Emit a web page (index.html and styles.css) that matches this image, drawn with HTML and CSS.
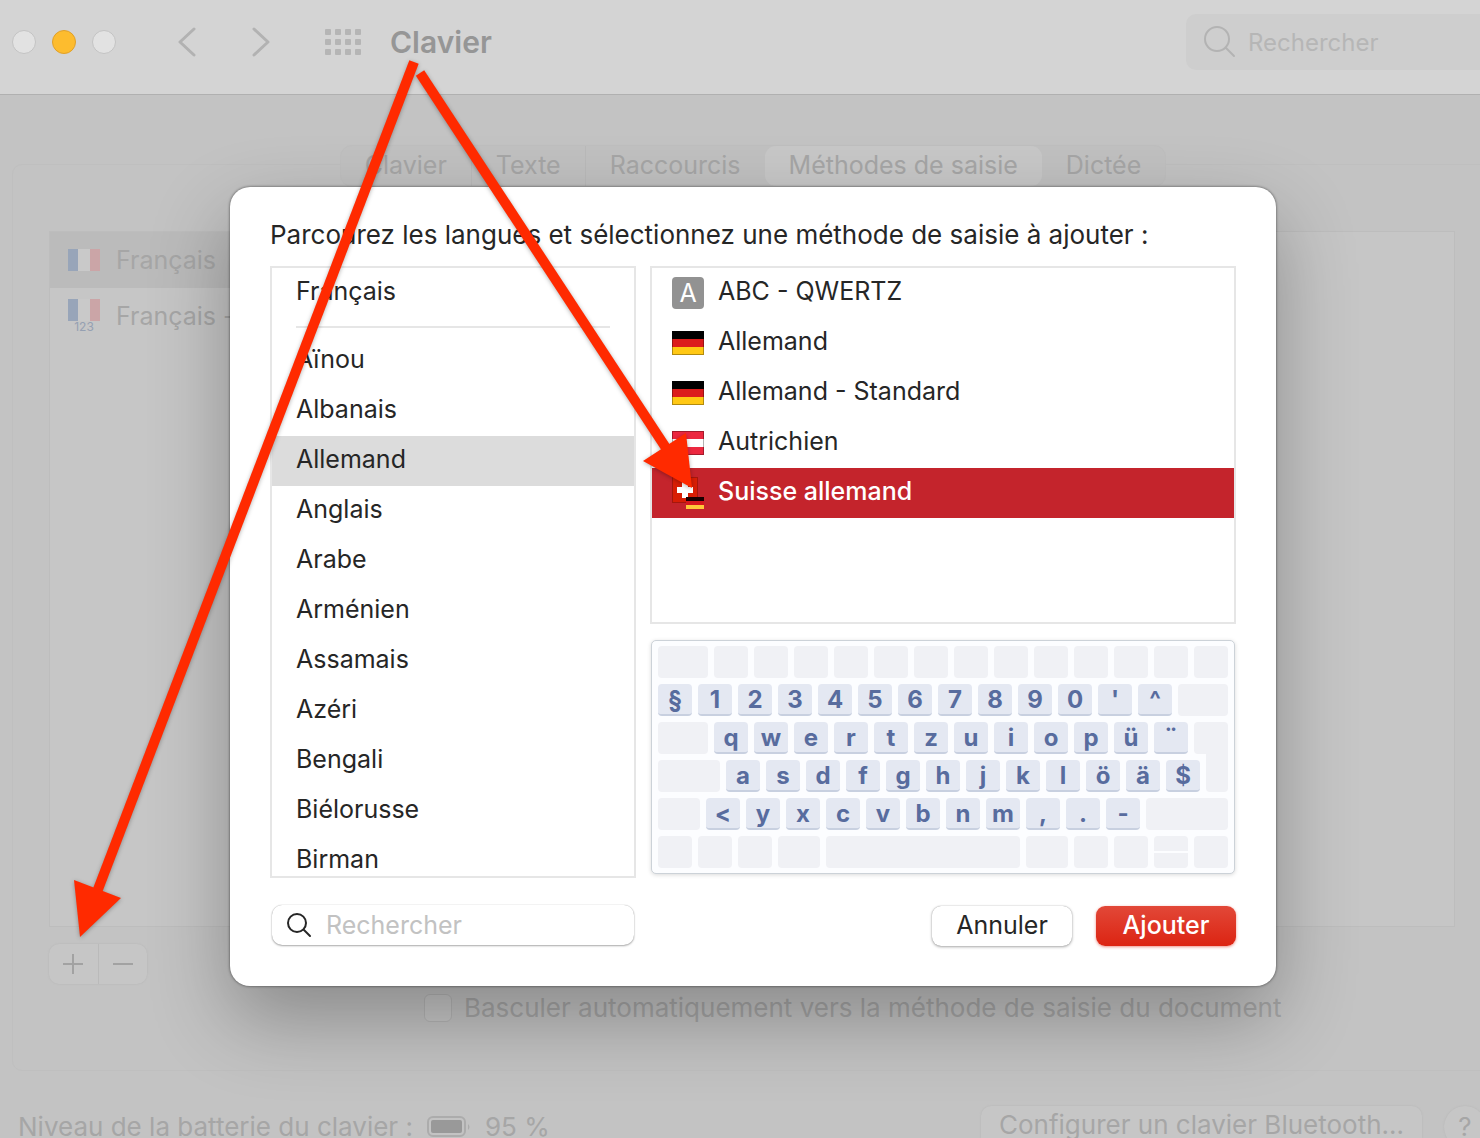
FILE: index.html
```html
<!DOCTYPE html>
<html lang="fr">
<head>
    <meta charset="UTF-8">
    <meta name="viewport" content="width=device-width, initial-scale=1.0">
    <title>Clavier</title>
    <link rel="stylesheet" href="styles.css">
</head>
<body>
    <div class="window">
        <header class="titlebar">
            <div class="lights">
                <button class="light" aria-label="Fermer"></button>
                <button class="light minimize" aria-label="Réduire"></button>
                <button class="light" aria-label="Agrandir"></button>
            </div>
            <div class="nav">
                <button aria-label="Précédent">
                    <svg width="20" height="30" viewBox="0 0 20 30"><path d="M17 2L3 15l14 13"/></svg>
                </button>
                <button aria-label="Suivant">
                    <svg width="20" height="30" viewBox="0 0 20 30"><path d="M3 2l14 13L3 28"/></svg>
                </button>
            </div>
            <button class="grid-button" aria-label="Tout afficher">
                <svg width="36" height="26" viewBox="0 0 36 26">
                    <defs>
                        <g id="dots">
                            <rect width="6" height="6" rx="1"/>
                            <rect x="10" width="6" height="6" rx="1"/>
                            <rect x="20" width="6" height="6" rx="1"/>
                            <rect x="30" width="6" height="6" rx="1"/>
                        </g>
                    </defs>
                    <use href="#dots"/>
                    <use href="#dots" y="10"/>
                    <use href="#dots" y="20"/>
                </svg>
            </button>
            <h1>Clavier</h1>
            <label class="top-search">
                <svg width="32" height="32" viewBox="0 0 32 32"><circle cx="13" cy="13" r="12"/><path d="M22 22l8 8"/></svg>
                <input type="text" placeholder="Rechercher" aria-label="Rechercher">
            </label>
        </header>

        <main>
            <nav class="tabs">
                <button>Clavier</button>
                <button>Texte</button>
                <button>Raccourcis</button>
                <button class="active">Méthodes de saisie</button>
                <button>Dictée</button>
            </nav>

            <section class="panel">
                <div class="panes">
                    <ul class="sources">
                        <li class="selected">
                            <span class="source-icon"><span class="flag-fr"></span></span>
                            Français
                        </li>
                        <li>
                            <span class="source-icon"><span class="flag-fr"></span><small>123</small></span>
                            Français - numérique
                        </li>
                    </ul>
                    <div class="preview"></div>
                </div>
                <div class="plus-minus">
                    <button aria-label="Ajouter une méthode">
                        <svg width="22" height="22" viewBox="0 0 22 22"><path d="M11 1v20M1 11h20"/></svg>
                    </button>
                    <button aria-label="Supprimer la méthode">
                        <svg width="22" height="22" viewBox="0 0 22 22"><path d="M1 11h20"/></svg>
                    </button>
                </div>
                <label class="auto-switch">
                    <input type="checkbox">
                    Basculer automatiquement vers la méthode de saisie du document
                </label>
            </section>

            <footer>
                <span>Niveau de la batterie du clavier :</span>
                <svg class="battery" width="44" height="22" viewBox="0 0 44 22">
                    <rect x="1" y="1" width="37" height="19" rx="5" fill="none" stroke="#acacac" stroke-width="2"/>
                    <rect x="4" y="4" width="31" height="13" rx="2" fill="#999"/>
                    <path d="M41 8q3 3 0 6z" fill="#acacac"/>
                </svg>
                <span>95 %</span>
                <button class="bluetooth">Configurer un clavier Bluetooth…</button>
                <button class="help">?</button>
            </footer>
        </main>

        <div class="sheet">
            <div class="dialog" role="dialog" aria-labelledby="dialog-title">
                <h2 id="dialog-title">Parcourez les langues et sélectionnez une méthode de saisie à ajouter :</h2>
                <div class="columns">
                    <ul class="languages" role="listbox" aria-label="Langues">
                        <li role="option">Français</li>
                        <li class="separator" role="presentation"></li>
                        <li role="option">Aïnou</li>
                        <li role="option">Albanais</li>
                        <li role="option" class="selected" aria-selected="true">Allemand</li>
                        <li role="option">Anglais</li>
                        <li role="option">Arabe</li>
                        <li role="option">Arménien</li>
                        <li role="option">Assamais</li>
                        <li role="option">Azéri</li>
                        <li role="option">Bengali</li>
                        <li role="option">Biélorusse</li>
                        <li role="option">Birman</li>
                    </ul>

                    <div class="right">
                        <ul class="layouts" role="listbox" aria-label="Méthodes de saisie">
                            <li role="option"><span class="icon abc">A</span><span>ABC - QWERTZ</span></li>
                            <li role="option"><span class="icon flag german"></span><span>Allemand</span></li>
                            <li role="option"><span class="icon flag german"></span><span>Allemand - Standard</span></li>
                            <li role="option"><span class="icon flag austrian"></span><span>Autrichien</span></li>
                            <li role="option" class="selected" aria-selected="true">
                                <svg class="icon" width="32" height="32" viewBox="0 0 32 32">
                                    <rect x="0.5" y="0.5" width="25" height="25" fill="#d81e05" stroke="#a5170c"/>
                                    <path d="M10 5h6v5h5v6h-5v5h-6v-5H5v-6h5z" fill="#fff"/>
                                    <rect x="14" y="20" width="18" height="4" fill="#1a0000"/>
                                    <rect x="14" y="24" width="18" height="4" fill="#d6161c"/>
                                    <rect x="14" y="28" width="18" height="4" fill="#ffc83a"/>
                                </svg>
                                <span>Suisse allemand</span>
                            </li>
                        </ul>
                        <div class="keyboard" id="keyboard"></div>
                    </div>
                </div>
                <div class="actions">
                    <label class="search">
                        <svg width="26" height="26" viewBox="0 0 26 26"><circle cx="11" cy="11" r="9"/><path d="M18 18l6 6"/></svg>
                        <input type="text" placeholder="Rechercher" aria-label="Rechercher une langue">
                    </label>
                    <button class="cancel">Annuler</button>
                    <button class="add">Ajouter</button>
                </div>
            </div>
        </div>

        <svg class="arrows" width="740" height="960" viewBox="0 0 740 960">
            <path class="line" d="M414 62L97 892"/>
            <path class="head" d="M74 880l47 18-41 39z"/>
            <path class="line" d="M420 73l248 378"/>
            <path class="head" d="M643 461l43-28 6 55z"/>
        </svg>
    </div>

    <script>
        // [label, width] for each key, an empty label is a blank key
        const letters = text => text.split(' ').map(c => [c, 34]);
        const blanks = n => Array(n).fill(['', 34]);
        const rows = [
            [['', 50], ...blanks(13)],
            [...letters("§ 1 2 3 4 5 6 7 8 9 0 ' ^"), ['', 50]],
            [['', 50], ...letters('q w e r t z u i o p ü ¨'), ['', 34]],
            [['', 62], ...letters('a s d f g h j k l ö ä $'), ['', 22, 'enter']],
            [['', 42], ...letters('< y x c v b n m , . -'), ['', 82]],
            [...blanks(3), ['', 42], ['', 194], ['', 42], ...blanks(2), ['', 34, 'split'], ['', 34]]
        ];

        document.getElementById('keyboard').innerHTML = rows.map(row =>
            '<div class="key-row">' + row.map(([label, width, extra]) =>
                `<span class="key ${label ? 'lit' : ''} ${extra || ''}" style="flex-grow: ${width}">${label.replace('<', '&lt;')}</span>`
            ).join('') + '</div>'
        ).join('');
    </script>
</body>
</html>
```
FILE: styles.css
```css
* {
    box-sizing: border-box;
}

body {
    margin: 0;
    height: 100vh;
    overflow: hidden;
    background-color: #c3c3c3;
    color: #a6a6a6;
    font-family: Inter, "Liberation Sans", sans-serif;
    font-size: 25px;
    line-height: 32px;
}

button,
input {
    font: inherit;
    color: inherit;
    border: none;
    background: none;
    padding: 0;
    margin: 0;
}

ul {
    list-style: none;
    margin: 0;
    padding: 0;
}

svg {
    flex-shrink: 0;
}

/* the window runs past the right edge of the screen */
.window {
    position: relative;
    width: calc(100% + 26px);
}

.titlebar {
    display: flex;
    align-items: center;
    height: 95px;
    padding: 0 0 10px 12px;
    background-color: #d4d4d4;
    border-bottom: 1px solid #b0b0b0;
}

.lights {
    display: flex;
    gap: 16px;
}

.light {
    width: 24px;
    height: 24px;
    border: 1px solid #c3c3c3;
    border-radius: 50%;
    background-color: #e2e2e2;
}

.light.minimize {
    background-color: #fdbc2e;
    border-color: #e0a02a;
}

.nav {
    display: flex;
    gap: 54px;
    margin-left: 61px;
}

.nav button,
.grid-button {
    display: flex;
}

.nav svg {
    fill: none;
    stroke: #b2b2b2;
    stroke-width: 3;
    stroke-linecap: round;
    stroke-linejoin: round;
}

.grid-button {
    margin-left: 54px;
    fill: #b5b5b5;
}

h1 {
    margin: 0 auto 0 29px;
    font-size: 30px;
    font-weight: 600;
    color: #969696;
}

.top-search {
    display: flex;
    align-items: center;
    gap: 12px;
    width: 320px;
    height: 56px;
    padding-left: 18px;
    border-radius: 10px;
    background-color: #cecece;
    font-size: 24px;
}

.top-search svg {
    fill: none;
    stroke: #b3b3b3;
    stroke-width: 2;
    stroke-linecap: round;
}

.top-search input {
    width: 200px;
    padding-top: 2px;
}

.top-search input::placeholder {
    color: #b6b6b6;
    opacity: 1;
}

main {
    padding: 50px 12px 0;
}

.tabs {
    position: relative;
    display: flex;
    width: max-content;
    height: 42px;
    margin: 0 auto -23px;
    border: 1px solid #bfbfbf;
    border-radius: 12px;
    background-color: #c1c1c1;
}

.tabs button {
    padding: 0 24px 2px;
    border-right: 1px solid #bababa;
}

.tabs button:nth-child(n+3) {
    border-right: none;
}

.tabs .active {
    border-radius: 11px;
    background-color: #c8c8c8;
}

.panel {
    padding: 66px 38px 46px 36px;
    border: 1px solid #bfbfbf;
    border-radius: 10px;
}

.panes {
    display: flex;
    gap: 16px;
    height: 696px;
}

.sources,
.preview {
    border: 1px solid #bdbdbd;
    background-color: #c6c6c6;
}

.sources {
    width: 420px;
}

.preview {
    flex: 1;
}

.sources li {
    display: flex;
    align-items: center;
    gap: 16px;
    height: 56px;
    padding-left: 18px;
    white-space: nowrap;
}

.sources .selected {
    background-color: #bbb;
}

.source-icon {
    width: 32px;
    font-size: 12px;
    line-height: 12px;
    text-align: center;
    color: #95a0b2;
}

.source-icon small {
    display: block;
    font-size: 12px;
}

.flag-fr {
    display: block;
    height: 22px;
    background: linear-gradient(to right, #98a5b9 10px, #c9c9c9 10px, #c9c9c9 22px, #cba5a7 22px);
}

.plus-minus {
    display: flex;
    width: 98px;
    height: 40px;
    margin-top: 17px;
    border-radius: 10px;
    background-color: #c6c6c6;
    box-shadow: 0 0 2px #b4b4b4;
}

.plus-minus button {
    display: flex;
    flex: 1;
    align-items: center;
    justify-content: center;
}

.plus-minus svg {
    stroke: #a2a2a2;
    stroke-width: 2;
}

.plus-minus button + button {
    border-left: 1px solid #bababa;
}

.auto-switch {
    display: flex;
    align-items: center;
    gap: 12px;
    margin: 8px 0 0 375px;
    font-size: 26px;
    white-space: nowrap;
}

.auto-switch input {
    appearance: none;
    width: 28px;
    height: 28px;
    border: 1px solid #b6b6b6;
    border-radius: 6px;
    background-color: #c8c8c8;
}

footer {
    display: flex;
    align-items: center;
    gap: 14px;
    margin-top: 35px;
    padding: 0 8px 0 6px;
    font-size: 26px;
    line-height: 24px;
}

.bluetooth {
    height: 42px;
    margin: 0 8px 0 auto;
    padding: 0 18px 4px;
    border-radius: 10px;
    background-color: #c6c6c6;
    box-shadow: 0 0 2px #b4b4b4;
}

.help {
    width: 42px;
    height: 42px;
    border-radius: 50%;
    background-color: #c6c6c6;
    box-shadow: 0 0 2px #b4b4b4;
}

/* dialog over the dimmed window */
.sheet {
    position: absolute;
    top: 187px;
    left: 0;
    right: 0;
    display: flex;
    justify-content: center;
}

.dialog {
    width: 1046px;
    padding: 32px 40px 40px;
    border-radius: 20px;
    background-color: #fff;
    color: #262626;
    box-shadow: 0 0 3px rgba(0, 0, 0, 0.6), 0 32px 80px rgba(0, 0, 0, 0.3);
}

h2 {
    margin: 0 0 15px;
    font-size: 26px;
    font-weight: 400;
    white-space: nowrap;
}

.columns {
    display: flex;
    gap: 14px;
}

.languages,
.layouts {
    border: 2px solid #e6e6e6;
    overflow: hidden;
}

.languages {
    width: 366px;
    height: 612px;
}

.languages li,
.layouts li {
    height: 50px;
    padding: 7px 24px 11px;
}

.languages .selected {
    background-color: #dcdcdc;
}

.languages .separator {
    height: 2px;
    margin: 8px 24px;
    padding: 0;
    background-color: #e6e6e6;
}

.right {
    display: flex;
    flex: 1;
    flex-direction: column;
    gap: 16px;
}

.layouts {
    height: 358px;
}

.layouts li {
    display: flex;
    gap: 14px;
    padding-left: 20px;
}

.layouts .selected {
    background-color: #c4242c;
    color: #fff;
    font-weight: 500;
}

.icon {
    width: 32px;
    height: 32px;
    margin-top: 2px;
}

.abc {
    border-radius: 4px;
    background-color: #929292;
    color: #fff;
    text-align: center;
}

.flag {
    height: 24px;
    margin-top: 6px;
    border: 1px solid rgba(0, 0, 0, 0.3);
    background-origin: border-box;
}

.german {
    background-image: linear-gradient(#000 8px, #dc1c1c 8px, #dc1c1c 16px, #ffc814 16px);
}

.austrian {
    background-image: linear-gradient(#ec2840 8px, #fff 8px, #fff 16px, #ec2840 16px);
}

.keyboard {
    display: flex;
    flex-direction: column;
    gap: 6px;
    margin: 0 1px;
    padding: 5px 6px;
    border: 1px solid #ccd2d8;
    border-radius: 5px;
    background-color: #fcfdff;
    box-shadow: 0 1px 4px rgba(0, 0, 0, 0.15);
}

.key-row {
    display: flex;
    gap: 6px;
}

.key {
    flex: 1 1 0;
    height: 32px;
    border-radius: 4px;
    background-color: #f0f1f5;
    color: #586c9e;
    font-size: 24px;
    font-weight: 700;
    line-height: 32px;
    text-align: center;
}

.key.lit {
    width: 0;
    background-color: #e4e8f2;
    border-bottom: 2px solid #c8d0e0;
}

.key.enter {
    position: relative;
}

/* joins the two halves of the enter key */
.key.enter::before {
    content: "";
    position: absolute;
    inset: -10px 0 auto;
    height: 16px;
    background-color: #f0f1f5;
}

.key.split {
    background-image: linear-gradient(transparent 15px, #fcfdff 15px, #fcfdff 17px, transparent 17px);
}

.actions {
    display: flex;
    align-items: center;
    gap: 24px;
    margin-top: 26px;
}

.search {
    display: flex;
    align-items: center;
    gap: 14px;
    width: 362px;
    height: 40px;
    margin: 0 auto 0 2px;
    padding-left: 14px;
    border-radius: 10px;
    box-shadow: 0 0 1px #aaa, 0 1px 2px #aaa;
}

.search svg {
    fill: none;
    stroke: #262626;
    stroke-width: 2;
    stroke-linecap: round;
}

.search input {
    width: 280px;
}

.search input::placeholder {
    color: #c2c2c2;
    opacity: 1;
}

.cancel,
.add {
    width: 140px;
    height: 40px;
    margin-top: 2px;
    padding-bottom: 2px;
    border-radius: 9px;
    box-shadow: 0 0 1px #999, 0 1px 3px #aaa;
}

.add {
    background: linear-gradient(#e24838, #dc2412);
    color: #fff;
    font-weight: 500;
    box-shadow: 0 1px 3px rgba(220, 36, 18, 0.5);
}

.arrows {
    position: absolute;
    top: 0;
    left: 0;
    pointer-events: none;
    filter: drop-shadow(0 1px 2px rgba(0, 0, 0, 0.3));
}

.arrows .line {
    stroke: #ff2a00;
    stroke-width: 10;
}

.arrows .head {
    fill: #ff2a00;
}
```
